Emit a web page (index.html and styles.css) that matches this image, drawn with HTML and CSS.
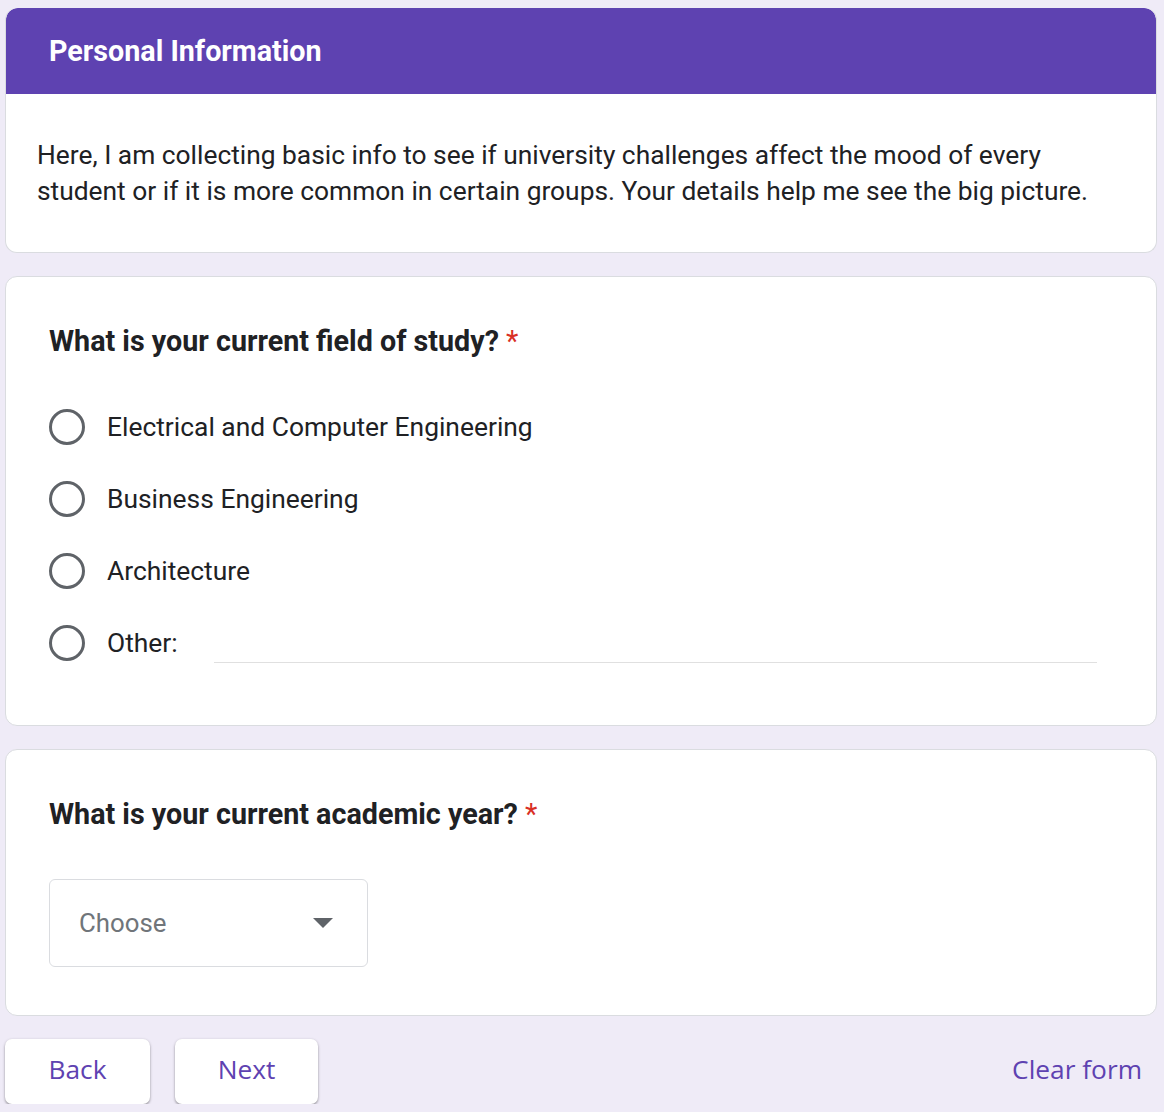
FILE: index.html
```html
<!DOCTYPE html>
<html>
<head>
<meta charset="utf-8">
<link rel="stylesheet" href="styles.css">
</head>
<body>
<div class="page">
  <section class="card intro">
    <div class="intro-head">Personal Information</div>
    <div class="intro-body">Here, I am collecting basic info to see if university challenges affect the mood of every student or if it is more common in certain groups. Your details help me see the big picture.</div>
  </section>

  <section class="card question">
    <div class="q-title">What is your current field of study? <span class="req">*</span></div>
    <div class="options">
      <div class="option"><span class="radio"></span><span class="opt-label">Electrical and Computer Engineering</span></div>
      <div class="option"><span class="radio"></span><span class="opt-label">Business Engineering</span></div>
      <div class="option"><span class="radio"></span><span class="opt-label">Architecture</span></div>
      <div class="option"><span class="radio"></span><span class="opt-label">Other:</span><span class="other-line"></span></div>
    </div>
  </section>

  <section class="card question q2">
    <div class="q-title">What is your current academic year? <span class="req">*</span></div>
    <div class="select">
      <span class="select-text">Choose</span>
      <svg class="caret" width="20" height="10" viewBox="0 0 20 10"><path d="M0 0 L20 0 L10 10 Z" fill="#5f6368"/></svg>
    </div>
  </section>

  <div class="actions">
    <div class="btns">
      <button class="btn btn-back">Back</button>
      <button class="btn btn-next">Next</button>
    </div>
    <span class="clear">Clear form</span>
  </div>
</div>
</body>
</html>
```

FILE: styles.css
```css
* { box-sizing: border-box; }
html, body { margin: 0; padding: 0; }
body {
  background: #efebf7;
  font-family: Roboto, "Noto Sans", Arial, sans-serif;
  color: #202124;
}
.page {
  padding: 8px 7px 0 5px;
  display: flex;
  flex-direction: column;
  gap: 23px;
}
.card {
  background: #fff;
  border: 1px solid #dadce0;
  border-radius: 12px;
  overflow: hidden;
}
.intro { border-top: none; }
.intro-head {
  background: #5e42b1;
  color: #fff;
  font-weight: 700;
  font-size: 28.7px;
  height: 86px;
  padding: 0 0 0 43px;
  display: flex;
  align-items: center;
  border-radius: 12px 12px 0 0;
}
.intro-body {
  font-size: 26.35px;
  line-height: 36px;
  padding: 43px 60px 43px 31px;
}
.question {
  padding: 47px 43px 64px 43px;
}
.q-title {
  font-size: 28.7px;
  font-weight: 700;
  line-height: 34px;
}
.req { color: #d93025; font-weight: 400; }
.options {
  margin-top: 51px;
  display: flex;
  flex-direction: column;
  gap: 36px;
}
.option {
  display: flex;
  align-items: center;
  height: 36px;
}
.radio {
  width: 36px;
  height: 36px;
  border: 3px solid #5f6368;
  border-radius: 50%;
  flex: none;
}
.opt-label {
  font-size: 26.4px;
  margin-left: 22px;
}
.other-line {
  flex: 1;
  align-self: flex-end;
  margin: 0 16px 0 36px;
  border-bottom: 1px solid #e0e0e0;
  transform: translateY(2px);
}
.q2 { padding-bottom: 48px; }
.select {
  margin-top: 48px;
  width: 319px;
  height: 88px;
  border: 1px solid #dadce0;
  border-radius: 6px;
  display: flex;
  align-items: center;
  justify-content: space-between;
  padding: 0 34px 0 29px;
}
.select-text { font-size: 25.8px; color: #70757a; }
.actions {
  display: flex;
  justify-content: space-between;
  align-items: flex-start;
}
.btns { display: flex; gap: 25px; }
.btn {
  font-family: "Open Sans", Roboto, sans-serif;
  background: #fff;
  border: none;
  border-radius: 7px;
  height: 65px;
  font-size: 26.3px;
  font-weight: 500;
  color: #5e42b1;
  padding: 0 0 5px 0;
  box-shadow: 0 1px 3px rgba(0,0,0,0.3), 0 2px 2px rgba(0,0,0,0.12);
}
.btn-back { width: 145px; }
.btn-next { width: 143px; }
.clear {
  font-family: "Open Sans", Roboto, sans-serif;
  color: #5e42b1;
  font-size: 26.3px;
  font-weight: 500;
  margin: 12px 15px 0 0;
}
```
